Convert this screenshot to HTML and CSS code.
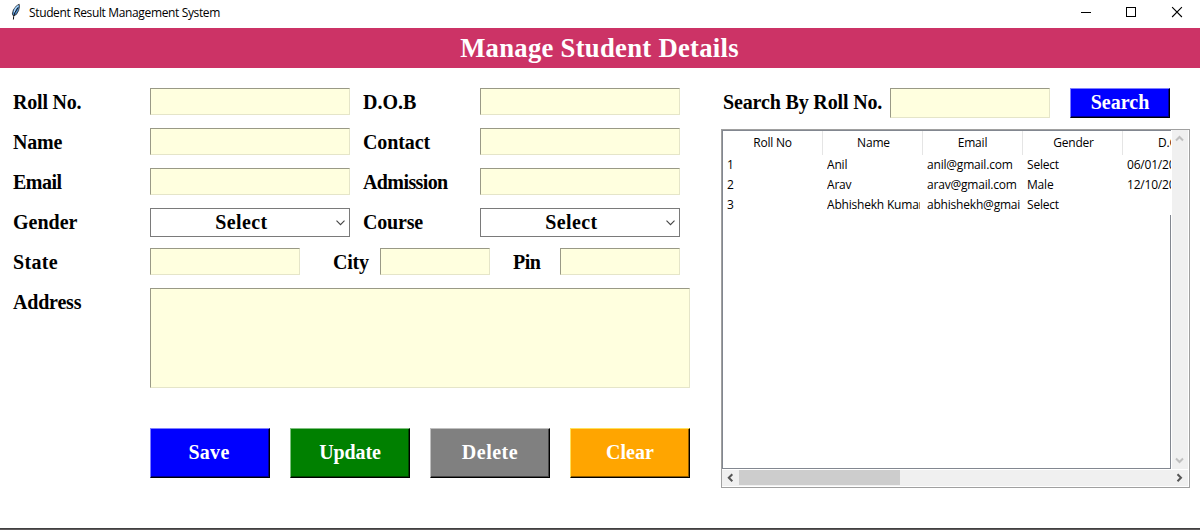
FILE: index.html
```html
<!DOCTYPE html>
<html lang="en">
<head>
<meta charset="utf-8">
<title>Student Result Management System</title>
<link rel="stylesheet" href="styles.css">
</head>
<body>
<div class="window">
  <header class="titlebar">
    <svg class="feather" width="12" height="18" viewBox="0 0 12 18">
      <path d="M9.200 1.200 6.400 2.900 3.400 6.800 2.300 11 3.500 13 6.400 11.400 8.600 7.600 9.400 3.900Z" fill="#4f8fd0" stroke="#222" stroke-width=".8"/>
      <path d="M8.400 2.600 5.400 5.600 4.200 9.400" fill="none" stroke="#b4dcff" stroke-width="1.300"/>
      <path d="M8 4.500 5 9.500 3.700 13.400 3.400 16.500" fill="none" stroke="#111" stroke-width="1"/>
    </svg>
    <span class="caption">Student Result Management System</span>
    <div class="controls">
      <svg width="46" height="28" viewBox="0 0 46 28" shape-rendering="crispEdges"><path d="M17 12.500h10" stroke="#000"/></svg>
      <svg width="46" height="28" viewBox="0 0 46 28" shape-rendering="crispEdges"><path d="M16.500 7.500h9v9h-9z" fill="none" stroke="#000"/></svg>
      <svg width="46" height="28" viewBox="0 0 46 28"><path d="M16.100 7.200l9.800 9.800M25.900 7.200L16.100 17" stroke="#000" stroke-width="1.100"/></svg>
    </div>
  </header>
  <h1 class="banner">Manage Student Details</h1>
  <main class="content">
    <form class="form">
      <div class="row">
        <label class="label t-20">Roll No.</label><div class="field"></div>
        <label class="label second">D.O.B</label><div class="field"></div>
      </div>
      <div class="row">
        <label class="label t-20">Name</label><div class="field"></div>
        <label class="label second t-10">Contact</label><div class="field"></div>
      </div>
      <div class="row">
        <label class="label t-50">Email</label><div class="field"></div>
        <label class="label second t-60">Admission</label><div class="field"></div>
      </div>
      <div class="row">
        <label class="label">Gender</label>
        <div class="combo"><span class="value">Select</span><svg width="9" height="6" viewBox="0 0 9 6"><path d="M.5 .7l4 4 4-4" fill="none" stroke="#444" stroke-width="1.100"/></svg></div>
        <label class="label second t-20">Course</label>
        <div class="combo"><span class="value">Select</span><svg width="9" height="6" viewBox="0 0 9 6"><path d="M.5 .7l4 4 4-4" fill="none" stroke="#444" stroke-width="1.100"/></svg></div>
      </div>
      <div class="row place">
        <label class="label t30">State</label><div class="field"></div>
        <label class="label city t-20">City</label><div class="field"></div>
        <label class="label pin t-50">Pin</label><div class="field"></div>
      </div>
      <div class="row address">
        <label class="label t-20">Address</label><div class="field area"></div>
      </div>
      <div class="actions">
        <button type="button" class="btn save t30">Save</button>
        <button type="button" class="btn update t-10">Update</button>
        <button type="button" class="btn delete t50">Delete</button>
        <button type="button" class="btn clear">Clear</button>
      </div>
    </form>
    <section class="results">
      <div class="search">
        <label class="label t-15">Search By Roll No.</label><div class="field"></div>
        <button type="button" class="btn find">Search</button>
      </div>
      <div class="frame">
        <div class="tree">
          <div class="line head"><span>Roll No</span><span class="nudge">Name</span><span>Email</span><span class="nudge">Gender</span><span>D.O.B</span></div>
          <div class="line"><span>1</span><span>Anil</span><span>anil@gmail.com</span><span>Select</span><span>06/01/2001</span></div>
          <div class="line"><span>2</span><span>Arav</span><span>arav@gmail.com</span><span>Male</span><span>12/10/2001</span></div>
          <div class="line"><span>3</span><span>Abhishekh Kumar</span><span>abhishekh@gmail.com</span><span>Select</span><span></span></div>
          <div class="blank"></div>
        </div>
        <div class="vbar">
          <svg width="16" height="16" viewBox="0 0 16 16"><path d="M4 10.500l3.500-3.500 3.500 3.500" fill="none" stroke="#bfbfbf" stroke-width="2"/></svg>
          <svg width="16" height="16" viewBox="0 0 16 16"><path d="M4 5.500l3.500 3.500 3.500-3.500" fill="none" stroke="#bfbfbf" stroke-width="2"/></svg>
        </div>
        <div class="hbar">
          <svg width="17" height="16" viewBox="0 0 17 16"><path d="M10.300 4.200L6.800 7.700l3.500 3.500" fill="none" stroke="#555" stroke-width="2"/></svg>
          <div class="thumb"></div>
          <svg class="right" width="17" height="16" viewBox="0 0 17 16"><path d="M6.500 4.200L10 7.700l-3.500 3.500" fill="none" stroke="#555" stroke-width="2"/></svg>
        </div>
      </div>
    </section>
  </main>
  <footer class="edge"></footer>
</div>
</body>
</html>
```
FILE: styles.css
```css
* { box-sizing: border-box; }
body { margin: 0; background: #fff; color: #000; }
svg { display: block; flex: none; }
.window { width: 1200px; height: 530px; display: flex; flex-direction: column; overflow: hidden; }

.titlebar { height: 28px; flex: none; display: flex; align-items: flex-start; padding-left: 10px; }
.feather { margin-top: 3px; }
.caption { margin-left: 7px; font: 12px/26px "Open Sans", sans-serif; letter-spacing: -.36px; white-space: nowrap; }
.controls { margin-left: auto; display: flex; margin-right: -2px; }

.banner { margin: 0; height: 40px; flex: none; background: #cc3366; color: #fff; text-align: center; font: bold 26.67px/40px "Liberation Serif", serif; letter-spacing: .28px; padding-right: 1px; }

.content { flex: 1; display: flex; padding: 20px 10px 0 13px; }
.label { font: bold 20px/29px "Liberation Serif", serif; white-space: nowrap; }
.t-60 { letter-spacing: -.6px; }
.t-50 { letter-spacing: -.5px; }
.t-20 { letter-spacing: -.2px; }
.t-15 { letter-spacing: -.15px; }
.t-10 { letter-spacing: -.1px; }
.t30 { letter-spacing: .3px; }
.t50 { letter-spacing: .5px; }

.form { width: 677px; margin: 0; }
.row { display: grid; grid-template-columns: 137px 200px 130px 200px; height: 40px; align-items: start; }
.row.place { grid-template-columns: 137px 150px 80px 110px 70px 120px; }
.row.address { grid-template-columns: 137px 540px; height: 140px; }
.second { padding-left: 13px; }
.city { padding-left: 33px; }
.pin { padding-left: 23px; }
.field { height: 27px; background: #ffffdf; border: 1px solid; border-color: #999986 #e5e5c9 #e5e5c9 #999986; }
.area { height: 100px; }
.combo { height: 29px; border: 1px solid #7a7a7a; display: flex; align-items: center; padding-right: 4px; }
.value { flex: 1; text-align: center; padding-right: 4px; font: bold 20px/27px "Liberation Serif", serif; letter-spacing: .4px; }

.actions { display: flex; gap: 20px; padding-left: 137px; }
.btn { width: 120px; height: 50px; padding: 0 0 2px; color: #fff; font: bold 20px/46px "Liberation Serif", serif; border: 1px solid #000; box-shadow: inset -1px -1px rgba(0, 0, 0, .45); }
.save, .find { background: #00f; border-top-color: #7f7fff; border-left-color: #7f7fff; }
.save { padding-right: 2px; }
.update { background: #008000; border-top-color: #7fbf7f; border-left-color: #7fbf7f; }
.delete { background: #808080; border-top-color: #bfbfbf; border-left-color: #bfbfbf; }
.clear { background: #ffa500; border-top-color: #ffe05a; border-left-color: #ffe05a; }

.results { width: 470px; margin-left: 30px; }
.search { display: flex; height: 40px; align-items: flex-start; padding-left: 3px; }
.search .label { width: 167px; }
.search .field { width: 160px; height: 30px; margin-right: 20px; }
.find { width: 100px; height: 30px; line-height: 26px; }

.frame { height: 360px; display: grid; grid-template-columns: 449px 16px; grid-template-rows: 339px 16px; gap: 1px; border: 1px solid #fff; border-width: 1px 0 0 1px; padding: 1px 0 0 1px; background: #fff; box-shadow: inset 1px 1px #a0a0a0, inset -1px -1px #a0a0a0; }
.tree { border: 1px solid #828790; border-right: 0; display: flex; flex-direction: column; overflow: hidden; }
.line { display: grid; grid-template-columns: repeat(4, 100px) 48px; height: 20px; font: 12px/20px "Open Sans", sans-serif; letter-spacing: -.2px; }
.line span { margin: 0 3px 0 4px; overflow: hidden; white-space: nowrap; }
.line span:last-child { margin-right: 0; }
.line.head { height: 24px; line-height: 24px; }
.line.head span { margin: 0; text-align: center; border-right: 1px solid #e5e5e5; }
.line.head .nudge { padding-left: 2px; }
.line.head span:last-child { border: 0; text-align: left; padding-left: 35px; }
.blank { flex: 1; border-right: 1px solid #828790; }
.vbar { background: #f0f0f0; display: flex; flex-direction: column; justify-content: space-between; }
.hbar { grid-column: 1 / 3; background: #f0f0f0; display: flex; }
.thumb { width: 161px; height: 15px; background: #cdcdcd; }
.right { margin-left: auto; }

.edge { height: 2px; flex: none; background: #5f5b5c; border-top: 1px solid #414141; }
```
